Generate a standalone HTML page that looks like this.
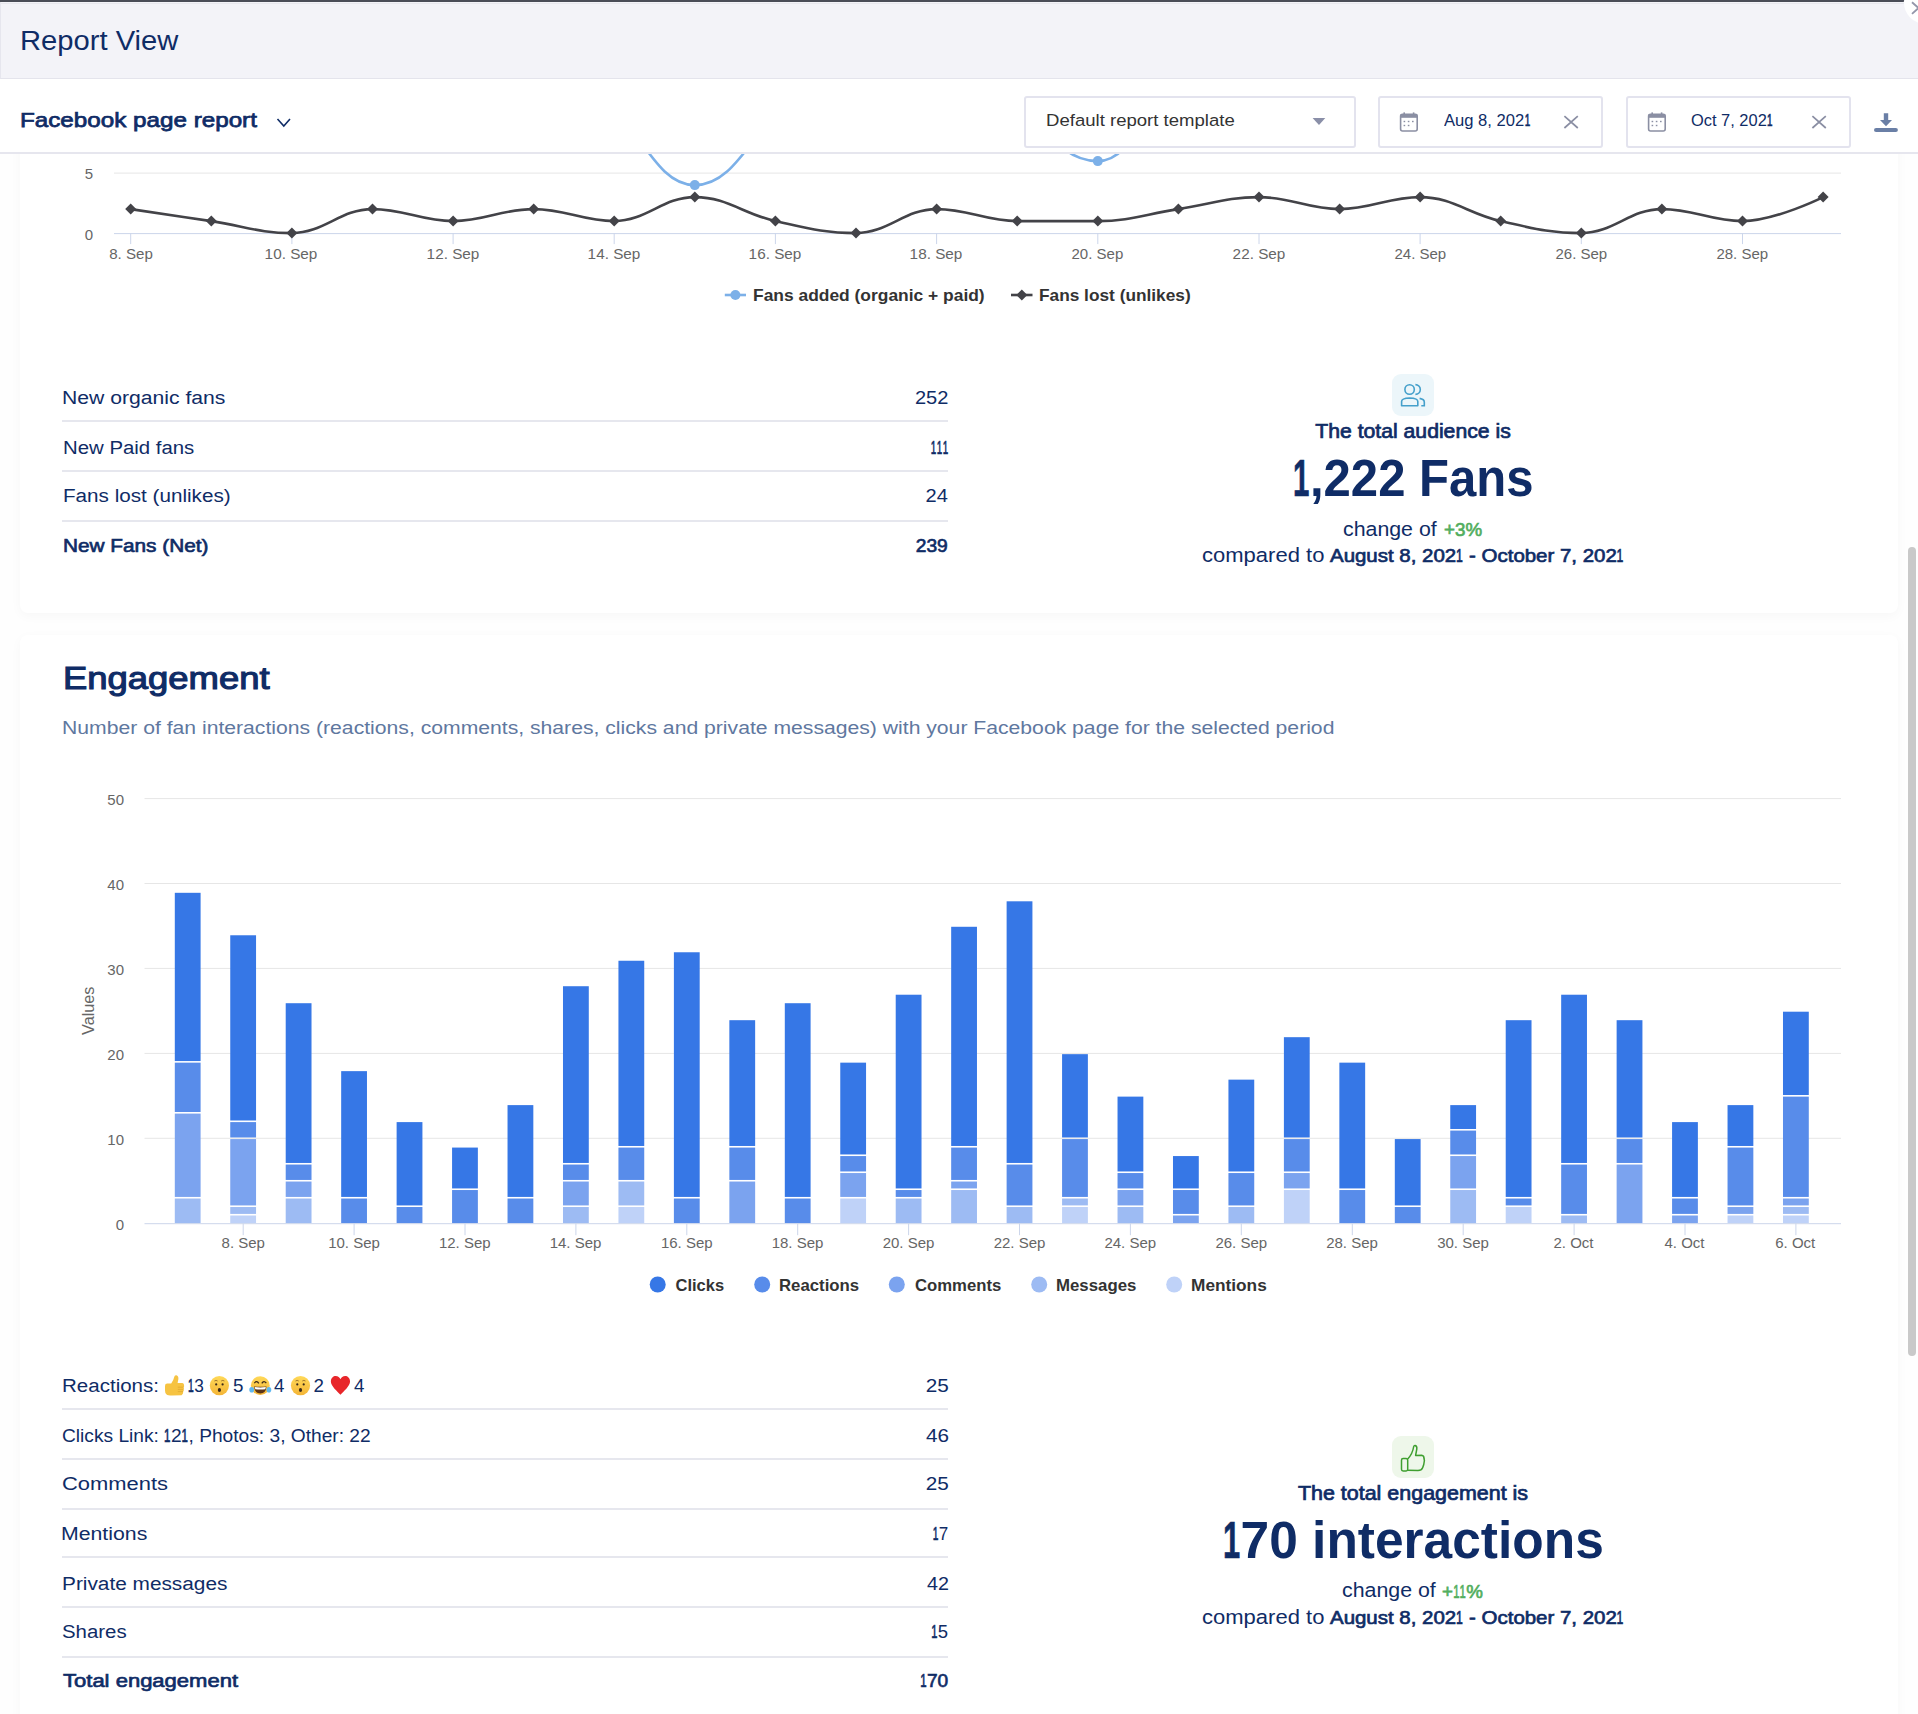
<!DOCTYPE html>
<html><head><meta charset="utf-8"><title>Report View</title>
<style>
html,body{margin:0;padding:0;}
body{width:1918px;height:1714px;overflow:hidden;position:relative;background:#fefefe;font-family:"Liberation Sans",sans-serif;}
.t{position:absolute;white-space:nowrap;line-height:1;}
.t b{font-weight:700;}
.n1{display:inline-block;transform:scaleX(0.6);margin:0 -0.1em;-webkit-text-stroke-width:0.7px;}
.card{position:absolute;left:20px;width:1878px;background:#fff;border-radius:8px;box-shadow:0 3px 12px rgba(0,0,0,0.03);}
svg{position:absolute;left:0;top:0;}
#hdr{position:absolute;left:0;top:0;width:1918px;height:153px;z-index:5;}
</style></head><body>
<div class="card" style="top:-200px;height:813px;"></div>
<div class="card" style="top:635px;height:1200px;"></div>
<svg width="1918" height="1714" viewBox="0 0 1918 1714">
<line x1="114" y1="173.1" x2="1841" y2="173.1" stroke="#e6e6e6" stroke-width="1"/>
<line x1="114" y1="113.1" x2="1841" y2="113.1" stroke="#e6e6e6" stroke-width="1"/>
<line x1="114" y1="53.1" x2="1841" y2="53.1" stroke="#e6e6e6" stroke-width="1"/>
<line x1="114" y1="233.6" x2="1841" y2="233.6" stroke="#ccd6eb" stroke-width="1"/>
<line x1="130.7" y1="233.1" x2="130.7" y2="244.1" stroke="#ccd6eb" stroke-width="1"/>
<line x1="291.9" y1="233.1" x2="291.9" y2="244.1" stroke="#ccd6eb" stroke-width="1"/>
<line x1="453.1" y1="233.1" x2="453.1" y2="244.1" stroke="#ccd6eb" stroke-width="1"/>
<line x1="614.2" y1="233.1" x2="614.2" y2="244.1" stroke="#ccd6eb" stroke-width="1"/>
<line x1="775.4" y1="233.1" x2="775.4" y2="244.1" stroke="#ccd6eb" stroke-width="1"/>
<line x1="936.6" y1="233.1" x2="936.6" y2="244.1" stroke="#ccd6eb" stroke-width="1"/>
<line x1="1097.8" y1="233.1" x2="1097.8" y2="244.1" stroke="#ccd6eb" stroke-width="1"/>
<line x1="1259.0" y1="233.1" x2="1259.0" y2="244.1" stroke="#ccd6eb" stroke-width="1"/>
<line x1="1420.1" y1="233.1" x2="1420.1" y2="244.1" stroke="#ccd6eb" stroke-width="1"/>
<line x1="1581.3" y1="233.1" x2="1581.3" y2="244.1" stroke="#ccd6eb" stroke-width="1"/>
<line x1="1742.5" y1="233.1" x2="1742.5" y2="244.1" stroke="#ccd6eb" stroke-width="1"/>
<path d="M 130.70 -6.90 C 130.70 -6.90 179.05 -6.90 211.29 -6.90 C 243.53 -6.90 259.64 -6.90 291.88 -6.90 C 324.12 -6.90 340.23 -6.90 372.47 -6.90 C 404.71 -6.90 420.82 -6.90 453.06 -6.90 C 485.30 -6.90 501.41 -6.90 533.65 -6.90 C 565.89 -6.90 582.00 68.70 614.24 107.10 C 646.48 145.50 662.59 185.10 694.83 185.10 C 727.07 185.10 743.18 151.50 775.42 113.10 C 807.66 74.70 823.77 -6.90 856.01 -6.90 C 888.25 -6.90 904.36 -6.90 936.60 -6.90 C 968.84 -6.90 984.95 67.50 1017.19 101.10 C 1049.43 134.70 1065.54 161.10 1097.78 161.10 C 1130.02 161.10 1146.13 110.70 1178.37 77.10 C 1210.61 43.50 1226.72 -6.90 1258.96 -6.90 C 1291.20 -6.90 1307.31 -6.90 1339.55 -6.90 C 1371.79 -6.90 1387.90 -6.90 1420.14 -6.90 C 1452.38 -6.90 1468.49 -6.90 1500.73 -6.90 C 1532.97 -6.90 1549.08 -6.90 1581.32 -6.90 C 1613.56 -6.90 1629.67 -6.90 1661.91 -6.90 C 1694.15 -6.90 1710.26 -6.90 1742.50 -6.90 C 1774.74 -6.90 1823.09 -6.90 1823.09 -6.90" fill="none" stroke="#7cb0e8" stroke-width="2.6"/>
<circle cx="130.7" cy="-6.9" r="5" fill="#7cb0e8"/>
<circle cx="211.3" cy="-6.9" r="5" fill="#7cb0e8"/>
<circle cx="291.9" cy="-6.9" r="5" fill="#7cb0e8"/>
<circle cx="372.5" cy="-6.9" r="5" fill="#7cb0e8"/>
<circle cx="453.1" cy="-6.9" r="5" fill="#7cb0e8"/>
<circle cx="533.7" cy="-6.9" r="5" fill="#7cb0e8"/>
<circle cx="614.2" cy="107.1" r="5" fill="#7cb0e8"/>
<circle cx="694.8" cy="185.1" r="5" fill="#7cb0e8"/>
<circle cx="775.4" cy="113.1" r="5" fill="#7cb0e8"/>
<circle cx="856.0" cy="-6.9" r="5" fill="#7cb0e8"/>
<circle cx="936.6" cy="-6.9" r="5" fill="#7cb0e8"/>
<circle cx="1017.2" cy="101.1" r="5" fill="#7cb0e8"/>
<circle cx="1097.8" cy="161.1" r="5" fill="#7cb0e8"/>
<circle cx="1178.4" cy="77.1" r="5" fill="#7cb0e8"/>
<circle cx="1259.0" cy="-6.9" r="5" fill="#7cb0e8"/>
<circle cx="1339.6" cy="-6.9" r="5" fill="#7cb0e8"/>
<circle cx="1420.1" cy="-6.9" r="5" fill="#7cb0e8"/>
<circle cx="1500.7" cy="-6.9" r="5" fill="#7cb0e8"/>
<circle cx="1581.3" cy="-6.9" r="5" fill="#7cb0e8"/>
<circle cx="1661.9" cy="-6.9" r="5" fill="#7cb0e8"/>
<circle cx="1742.5" cy="-6.9" r="5" fill="#7cb0e8"/>
<circle cx="1823.1" cy="-6.9" r="5" fill="#7cb0e8"/>
<path d="M 130.70 209.10 C 130.70 209.10 179.05 216.30 211.29 221.10 C 243.53 225.90 259.64 233.10 291.88 233.10 C 324.12 233.10 340.23 209.10 372.47 209.10 C 404.71 209.10 420.82 221.10 453.06 221.10 C 485.30 221.10 501.41 209.10 533.65 209.10 C 565.89 209.10 582.00 221.10 614.24 221.10 C 646.48 221.10 662.59 197.10 694.83 197.10 C 727.07 197.10 743.18 213.90 775.42 221.10 C 807.66 228.30 823.77 233.10 856.01 233.10 C 888.25 233.10 904.36 209.10 936.60 209.10 C 968.84 209.10 984.95 221.10 1017.19 221.10 C 1049.43 221.10 1065.54 221.10 1097.78 221.10 C 1130.02 221.10 1146.13 213.90 1178.37 209.10 C 1210.61 204.30 1226.72 197.10 1258.96 197.10 C 1291.20 197.10 1307.31 209.10 1339.55 209.10 C 1371.79 209.10 1387.90 197.10 1420.14 197.10 C 1452.38 197.10 1468.49 213.90 1500.73 221.10 C 1532.97 228.30 1549.08 233.10 1581.32 233.10 C 1613.56 233.10 1629.67 209.10 1661.91 209.10 C 1694.15 209.10 1710.26 221.10 1742.50 221.10 C 1774.74 221.10 1823.09 197.10 1823.09 197.10" fill="none" stroke="#434348" stroke-width="2.6"/>
<path d="M 130.7 203.6 L 136.2 209.1 L 130.7 214.6 L 125.2 209.1 Z" fill="#434348"/>
<path d="M 211.3 215.6 L 216.8 221.1 L 211.3 226.6 L 205.8 221.1 Z" fill="#434348"/>
<path d="M 291.9 227.6 L 297.4 233.1 L 291.9 238.6 L 286.4 233.1 Z" fill="#434348"/>
<path d="M 372.5 203.6 L 378.0 209.1 L 372.5 214.6 L 367.0 209.1 Z" fill="#434348"/>
<path d="M 453.1 215.6 L 458.6 221.1 L 453.1 226.6 L 447.6 221.1 Z" fill="#434348"/>
<path d="M 533.7 203.6 L 539.2 209.1 L 533.7 214.6 L 528.2 209.1 Z" fill="#434348"/>
<path d="M 614.2 215.6 L 619.7 221.1 L 614.2 226.6 L 608.7 221.1 Z" fill="#434348"/>
<path d="M 694.8 191.6 L 700.3 197.1 L 694.8 202.6 L 689.3 197.1 Z" fill="#434348"/>
<path d="M 775.4 215.6 L 780.9 221.1 L 775.4 226.6 L 769.9 221.1 Z" fill="#434348"/>
<path d="M 856.0 227.6 L 861.5 233.1 L 856.0 238.6 L 850.5 233.1 Z" fill="#434348"/>
<path d="M 936.6 203.6 L 942.1 209.1 L 936.6 214.6 L 931.1 209.1 Z" fill="#434348"/>
<path d="M 1017.2 215.6 L 1022.7 221.1 L 1017.2 226.6 L 1011.7 221.1 Z" fill="#434348"/>
<path d="M 1097.8 215.6 L 1103.3 221.1 L 1097.8 226.6 L 1092.3 221.1 Z" fill="#434348"/>
<path d="M 1178.4 203.6 L 1183.9 209.1 L 1178.4 214.6 L 1172.9 209.1 Z" fill="#434348"/>
<path d="M 1259.0 191.6 L 1264.5 197.1 L 1259.0 202.6 L 1253.5 197.1 Z" fill="#434348"/>
<path d="M 1339.6 203.6 L 1345.1 209.1 L 1339.6 214.6 L 1334.1 209.1 Z" fill="#434348"/>
<path d="M 1420.1 191.6 L 1425.6 197.1 L 1420.1 202.6 L 1414.6 197.1 Z" fill="#434348"/>
<path d="M 1500.7 215.6 L 1506.2 221.1 L 1500.7 226.6 L 1495.2 221.1 Z" fill="#434348"/>
<path d="M 1581.3 227.6 L 1586.8 233.1 L 1581.3 238.6 L 1575.8 233.1 Z" fill="#434348"/>
<path d="M 1661.9 203.6 L 1667.4 209.1 L 1661.9 214.6 L 1656.4 209.1 Z" fill="#434348"/>
<path d="M 1742.5 215.6 L 1748.0 221.1 L 1742.5 226.6 L 1737.0 221.1 Z" fill="#434348"/>
<path d="M 1823.1 191.6 L 1828.6 197.1 L 1823.1 202.6 L 1817.6 197.1 Z" fill="#434348"/>
<line x1="724.8" y1="295" x2="746" y2="295" stroke="#7cb0e8" stroke-width="2.6"/><circle cx="735.4" cy="295" r="5" fill="#7cb0e8"/>
<line x1="1011" y1="295" x2="1032.5" y2="295" stroke="#434348" stroke-width="2.6"/><path d="M 1021.8 289.5 L 1027.3 295 L 1021.8 300.5 L 1016.3 295 Z" fill="#434348"/>
<rect x="62" y="420" width="886" height="2" fill="#e6e7ee"/>
<rect x="62" y="470" width="886" height="2" fill="#e6e7ee"/>
<rect x="62" y="520" width="886" height="2" fill="#e6e7ee"/>
<rect x="62" y="1408" width="886" height="2" fill="#e6e7ee"/>
<rect x="62" y="1458" width="886" height="2" fill="#e6e7ee"/>
<rect x="62" y="1508" width="886" height="2" fill="#e6e7ee"/>
<rect x="62" y="1556" width="886" height="2" fill="#e6e7ee"/>
<rect x="62" y="1606" width="886" height="2" fill="#e6e7ee"/>
<rect x="62" y="1656" width="886" height="2" fill="#e6e7ee"/>
<line x1="144.5" y1="1138.3" x2="1841" y2="1138.3" stroke="#e6e6e6" stroke-width="1"/>
<line x1="144.5" y1="1053.4" x2="1841" y2="1053.4" stroke="#e6e6e6" stroke-width="1"/>
<line x1="144.5" y1="968.4" x2="1841" y2="968.4" stroke="#e6e6e6" stroke-width="1"/>
<line x1="144.5" y1="883.5" x2="1841" y2="883.5" stroke="#e6e6e6" stroke-width="1"/>
<line x1="144.5" y1="798.6" x2="1841" y2="798.6" stroke="#e6e6e6" stroke-width="1"/>
<rect x="174.80" y="1198.52" width="25.8" height="24.68" fill="#9dbbf3"/>
<rect x="174.80" y="1113.60" width="25.8" height="83.32" fill="#7ba3ef"/>
<rect x="174.80" y="1062.65" width="25.8" height="49.35" fill="#588cea"/>
<rect x="174.80" y="892.81" width="25.8" height="168.24" fill="#3677e6"/>
<rect x="230.25" y="1215.51" width="25.8" height="7.69" fill="#bfd2f8"/>
<rect x="230.25" y="1207.02" width="25.8" height="6.89" fill="#9dbbf3"/>
<rect x="230.25" y="1139.08" width="25.8" height="66.34" fill="#7ba3ef"/>
<rect x="230.25" y="1122.10" width="25.8" height="15.38" fill="#588cea"/>
<rect x="230.25" y="935.27" width="25.8" height="185.22" fill="#3677e6"/>
<rect x="285.71" y="1198.52" width="25.8" height="24.68" fill="#9dbbf3"/>
<rect x="285.71" y="1181.54" width="25.8" height="15.38" fill="#7ba3ef"/>
<rect x="285.71" y="1164.56" width="25.8" height="15.38" fill="#588cea"/>
<rect x="285.71" y="1003.21" width="25.8" height="159.75" fill="#3677e6"/>
<rect x="341.17" y="1198.52" width="25.8" height="24.68" fill="#588cea"/>
<rect x="341.17" y="1071.14" width="25.8" height="125.78" fill="#3677e6"/>
<rect x="396.62" y="1207.02" width="25.8" height="16.18" fill="#588cea"/>
<rect x="396.62" y="1122.10" width="25.8" height="83.32" fill="#3677e6"/>
<rect x="452.07" y="1190.03" width="25.8" height="33.17" fill="#588cea"/>
<rect x="452.07" y="1147.57" width="25.8" height="40.86" fill="#3677e6"/>
<rect x="507.53" y="1198.52" width="25.8" height="24.68" fill="#588cea"/>
<rect x="507.53" y="1105.11" width="25.8" height="91.81" fill="#3677e6"/>
<rect x="562.99" y="1207.02" width="25.8" height="16.18" fill="#9dbbf3"/>
<rect x="562.99" y="1181.54" width="25.8" height="23.88" fill="#7ba3ef"/>
<rect x="562.99" y="1164.56" width="25.8" height="15.38" fill="#588cea"/>
<rect x="562.99" y="986.22" width="25.8" height="176.73" fill="#3677e6"/>
<rect x="618.44" y="1207.02" width="25.8" height="16.18" fill="#bfd2f8"/>
<rect x="618.44" y="1181.54" width="25.8" height="23.88" fill="#9dbbf3"/>
<rect x="618.44" y="1147.57" width="25.8" height="32.37" fill="#588cea"/>
<rect x="618.44" y="960.75" width="25.8" height="185.22" fill="#3677e6"/>
<rect x="673.89" y="1198.52" width="25.8" height="24.68" fill="#588cea"/>
<rect x="673.89" y="952.26" width="25.8" height="244.67" fill="#3677e6"/>
<rect x="729.35" y="1181.54" width="25.8" height="41.66" fill="#7ba3ef"/>
<rect x="729.35" y="1147.57" width="25.8" height="32.37" fill="#588cea"/>
<rect x="729.35" y="1020.19" width="25.8" height="125.78" fill="#3677e6"/>
<rect x="784.80" y="1198.52" width="25.8" height="24.68" fill="#588cea"/>
<rect x="784.80" y="1003.21" width="25.8" height="193.72" fill="#3677e6"/>
<rect x="840.26" y="1198.52" width="25.8" height="24.68" fill="#bfd2f8"/>
<rect x="840.26" y="1173.05" width="25.8" height="23.88" fill="#7ba3ef"/>
<rect x="840.26" y="1156.06" width="25.8" height="15.38" fill="#588cea"/>
<rect x="840.26" y="1062.65" width="25.8" height="91.81" fill="#3677e6"/>
<rect x="895.72" y="1198.52" width="25.8" height="24.68" fill="#9dbbf3"/>
<rect x="895.72" y="1190.03" width="25.8" height="6.89" fill="#588cea"/>
<rect x="895.72" y="994.72" width="25.8" height="193.72" fill="#3677e6"/>
<rect x="951.17" y="1190.03" width="25.8" height="33.17" fill="#9dbbf3"/>
<rect x="951.17" y="1181.54" width="25.8" height="6.89" fill="#7ba3ef"/>
<rect x="951.17" y="1147.57" width="25.8" height="32.37" fill="#588cea"/>
<rect x="951.17" y="926.78" width="25.8" height="219.19" fill="#3677e6"/>
<rect x="1006.62" y="1207.02" width="25.8" height="16.18" fill="#9dbbf3"/>
<rect x="1006.62" y="1164.56" width="25.8" height="40.86" fill="#588cea"/>
<rect x="1006.62" y="901.30" width="25.8" height="261.65" fill="#3677e6"/>
<rect x="1062.08" y="1207.02" width="25.8" height="16.18" fill="#bfd2f8"/>
<rect x="1062.08" y="1198.52" width="25.8" height="6.89" fill="#9dbbf3"/>
<rect x="1062.08" y="1139.08" width="25.8" height="57.84" fill="#588cea"/>
<rect x="1062.08" y="1054.16" width="25.8" height="83.32" fill="#3677e6"/>
<rect x="1117.53" y="1207.02" width="25.8" height="16.18" fill="#9dbbf3"/>
<rect x="1117.53" y="1190.03" width="25.8" height="15.38" fill="#7ba3ef"/>
<rect x="1117.53" y="1173.05" width="25.8" height="15.38" fill="#588cea"/>
<rect x="1117.53" y="1096.62" width="25.8" height="74.83" fill="#3677e6"/>
<rect x="1172.99" y="1215.51" width="25.8" height="7.69" fill="#7ba3ef"/>
<rect x="1172.99" y="1190.03" width="25.8" height="23.88" fill="#588cea"/>
<rect x="1172.99" y="1156.06" width="25.8" height="32.37" fill="#3677e6"/>
<rect x="1228.44" y="1207.02" width="25.8" height="16.18" fill="#9dbbf3"/>
<rect x="1228.44" y="1173.05" width="25.8" height="32.37" fill="#588cea"/>
<rect x="1228.44" y="1079.64" width="25.8" height="91.81" fill="#3677e6"/>
<rect x="1283.90" y="1190.03" width="25.8" height="33.17" fill="#bfd2f8"/>
<rect x="1283.90" y="1173.05" width="25.8" height="15.38" fill="#7ba3ef"/>
<rect x="1283.90" y="1139.08" width="25.8" height="32.37" fill="#588cea"/>
<rect x="1283.90" y="1037.18" width="25.8" height="100.30" fill="#3677e6"/>
<rect x="1339.36" y="1190.03" width="25.8" height="33.17" fill="#588cea"/>
<rect x="1339.36" y="1062.65" width="25.8" height="125.78" fill="#3677e6"/>
<rect x="1394.81" y="1207.02" width="25.8" height="16.18" fill="#588cea"/>
<rect x="1394.81" y="1139.08" width="25.8" height="66.34" fill="#3677e6"/>
<rect x="1450.26" y="1190.03" width="25.8" height="33.17" fill="#9dbbf3"/>
<rect x="1450.26" y="1156.06" width="25.8" height="32.37" fill="#7ba3ef"/>
<rect x="1450.26" y="1130.59" width="25.8" height="23.88" fill="#588cea"/>
<rect x="1450.26" y="1105.11" width="25.8" height="23.88" fill="#3677e6"/>
<rect x="1505.72" y="1207.02" width="25.8" height="16.18" fill="#bfd2f8"/>
<rect x="1505.72" y="1198.52" width="25.8" height="6.89" fill="#588cea"/>
<rect x="1505.72" y="1020.19" width="25.8" height="176.73" fill="#3677e6"/>
<rect x="1561.17" y="1215.51" width="25.8" height="7.69" fill="#9dbbf3"/>
<rect x="1561.17" y="1164.56" width="25.8" height="49.35" fill="#588cea"/>
<rect x="1561.17" y="994.72" width="25.8" height="168.24" fill="#3677e6"/>
<rect x="1616.63" y="1164.56" width="25.8" height="58.64" fill="#7ba3ef"/>
<rect x="1616.63" y="1139.08" width="25.8" height="23.88" fill="#588cea"/>
<rect x="1616.63" y="1020.19" width="25.8" height="117.29" fill="#3677e6"/>
<rect x="1672.08" y="1215.51" width="25.8" height="7.69" fill="#7ba3ef"/>
<rect x="1672.08" y="1198.52" width="25.8" height="15.38" fill="#588cea"/>
<rect x="1672.08" y="1122.10" width="25.8" height="74.83" fill="#3677e6"/>
<rect x="1727.54" y="1215.51" width="25.8" height="7.69" fill="#bfd2f8"/>
<rect x="1727.54" y="1207.02" width="25.8" height="6.89" fill="#7ba3ef"/>
<rect x="1727.54" y="1147.57" width="25.8" height="57.84" fill="#588cea"/>
<rect x="1727.54" y="1105.11" width="25.8" height="40.86" fill="#3677e6"/>
<rect x="1782.99" y="1215.51" width="25.8" height="7.69" fill="#bfd2f8"/>
<rect x="1782.99" y="1207.02" width="25.8" height="6.89" fill="#9dbbf3"/>
<rect x="1782.99" y="1198.52" width="25.8" height="6.89" fill="#7ba3ef"/>
<rect x="1782.99" y="1096.62" width="25.8" height="100.30" fill="#588cea"/>
<rect x="1782.99" y="1011.70" width="25.8" height="83.32" fill="#3677e6"/>
<line x1="144.5" y1="1223.7" x2="1841" y2="1223.7" stroke="#ccd6eb" stroke-width="1"/>
<line x1="243.2" y1="1223.2" x2="243.2" y2="1235.2" stroke="#ccd6eb" stroke-width="1"/>
<line x1="354.1" y1="1223.2" x2="354.1" y2="1235.2" stroke="#ccd6eb" stroke-width="1"/>
<line x1="465.0" y1="1223.2" x2="465.0" y2="1235.2" stroke="#ccd6eb" stroke-width="1"/>
<line x1="575.9" y1="1223.2" x2="575.9" y2="1235.2" stroke="#ccd6eb" stroke-width="1"/>
<line x1="686.8" y1="1223.2" x2="686.8" y2="1235.2" stroke="#ccd6eb" stroke-width="1"/>
<line x1="797.7" y1="1223.2" x2="797.7" y2="1235.2" stroke="#ccd6eb" stroke-width="1"/>
<line x1="908.6" y1="1223.2" x2="908.6" y2="1235.2" stroke="#ccd6eb" stroke-width="1"/>
<line x1="1019.5" y1="1223.2" x2="1019.5" y2="1235.2" stroke="#ccd6eb" stroke-width="1"/>
<line x1="1130.4" y1="1223.2" x2="1130.4" y2="1235.2" stroke="#ccd6eb" stroke-width="1"/>
<line x1="1241.3" y1="1223.2" x2="1241.3" y2="1235.2" stroke="#ccd6eb" stroke-width="1"/>
<line x1="1352.3" y1="1223.2" x2="1352.3" y2="1235.2" stroke="#ccd6eb" stroke-width="1"/>
<line x1="1463.2" y1="1223.2" x2="1463.2" y2="1235.2" stroke="#ccd6eb" stroke-width="1"/>
<line x1="1574.1" y1="1223.2" x2="1574.1" y2="1235.2" stroke="#ccd6eb" stroke-width="1"/>
<line x1="1685.0" y1="1223.2" x2="1685.0" y2="1235.2" stroke="#ccd6eb" stroke-width="1"/>
<line x1="1795.9" y1="1223.2" x2="1795.9" y2="1235.2" stroke="#ccd6eb" stroke-width="1"/>
<text transform="translate(94,1010.8) rotate(-90)" x="0" y="0" text-anchor="middle" font-family="Liberation Sans" font-size="16" fill="#666666" textLength="48.3" lengthAdjust="spacingAndGlyphs">Values</text>
<circle cx="657.7" cy="1284.5" r="8" fill="#3677e6"/>
<circle cx="762.2" cy="1284.5" r="8" fill="#588cea"/>
<circle cx="896.8" cy="1284.5" r="8" fill="#7ba3ef"/>
<circle cx="1039.2" cy="1284.5" r="8" fill="#9dbbf3"/>
<circle cx="1174.2" cy="1284.5" r="8" fill="#bfd2f8"/>
<rect x="1392" y="374" width="42" height="42" rx="9" fill="#ecf6fa"/>
<circle cx="1409.6" cy="389.5" r="4.7" fill="none" stroke="#45a0cb" stroke-width="1.6"/>
<path d="M 1415.4 384.6 A 4.9 4.9 0 0 1 1415.4 394.4" fill="none" stroke="#45a0cb" stroke-width="1.6"/>
<path d="M 1401.6 405.7 L 1401.6 401.5 Q 1401.6 398.2 1409.7 398 Q 1417.8 398.2 1417.8 401.5 L 1417.8 405.7 Z" fill="none" stroke="#45a0cb" stroke-width="1.6" stroke-linejoin="round"/>
<path d="M 1419.6 398.4 Q 1424.3 399.3 1424.3 402 L 1424.3 405.7 L 1421.3 405.7" fill="none" stroke="#45a0cb" stroke-width="1.6"/>
<rect x="1392" y="1436" width="42" height="42" rx="9" fill="#eef7ea"/>
<rect x="1401.5" y="1458.6" width="6.2" height="12.3" rx="1.6" fill="none" stroke="#3f9f30" stroke-width="1.5"/>
<path d="M 1407.7 1459 Q 1412.5 1454 1413.6 1447 Q 1414 1445.2 1415.2 1445.5 Q 1417.2 1446.2 1416.8 1449 L 1415.6 1455.4 L 1421.6 1455.3 Q 1424.2 1455.6 1424 1458.5 L 1424.4 1460.5 Q 1424 1465 1422.6 1467.8 Q 1421.6 1470.6 1418 1470.6 L 1407.7 1470.3" fill="none" stroke="#3f9f30" stroke-width="1.5" stroke-linejoin="round"/>
<defs><linearGradient id="yg" x1="0" y1="0" x2="0" y2="1"><stop offset="0" stop-color="#ffd958"/><stop offset="1" stop-color="#f4b537"/></linearGradient></defs>
<circle cx="219.4" cy="1385.6" r="9.6" fill="url(#yg)"/><circle cx="216.20000000000002" cy="1384.3999999999999" r="1.1" fill="#3b2a1a"/><circle cx="222.6" cy="1384.3999999999999" r="1.1" fill="#3b2a1a"/><path d="M 214.4 1381.0 Q 216.0 1379.8 217.6 1381.0 M 221.20000000000002 1381.0 Q 222.8 1379.8 224.4 1381.0" fill="none" stroke="#7a5220" stroke-width="0.7"/><ellipse cx="219.4" cy="1389.8999999999999" rx="1.6" ry="2" fill="#3b2a1a"/>
<circle cx="300.5" cy="1385.6" r="9.6" fill="url(#yg)"/><circle cx="297.3" cy="1384.3999999999999" r="1.1" fill="#3b2a1a"/><circle cx="303.7" cy="1384.3999999999999" r="1.1" fill="#3b2a1a"/><path d="M 295.5 1381.0 Q 297.1 1379.8 298.7 1381.0 M 302.3 1381.0 Q 303.9 1379.8 305.5 1381.0" fill="none" stroke="#7a5220" stroke-width="0.7"/><ellipse cx="300.5" cy="1389.8999999999999" rx="1.6" ry="2" fill="#3b2a1a"/>
<circle cx="260.3" cy="1385.6" r="9.4" fill="url(#yg)"/>
<path d="M 254.3 1383.1 Q 256.8 1380.1 258.8 1383.3999999999999 M 261.8 1383.3999999999999 Q 263.8 1380.1 266.3 1383.1" fill="none" stroke="#3b2a1a" stroke-width="1.2"/>
<path d="M 254.10000000000002 1386.3999999999999 Q 260.3 1387.1999999999998 266.5 1386.3999999999999 Q 265.8 1393.3999999999999 260.3 1393.3999999999999 Q 254.8 1393.3999999999999 254.10000000000002 1386.3999999999999 Z" fill="#5a3418"/>
<path d="M 254.70000000000002 1387.0 Q 260.3 1387.8 265.90000000000003 1387.0 L 265.3 1389.1999999999998 Q 260.3 1390.0 255.3 1389.1999999999998 Z" fill="#fff"/>
<ellipse cx="251.70000000000002" cy="1389.8" rx="2.4" ry="2.8" fill="#5fb8f0"/><ellipse cx="268.90000000000003" cy="1389.8" rx="2.4" ry="2.8" fill="#5fb8f0"/>
<path d="M 340.45 1394.8 C 337.45 1391.5 330.84999999999997 1386.1 330.84999999999997 1381.5 C 330.84999999999997 1377.9 333.45 1376.0 335.65 1376.0 C 338.05 1376.0 339.65 1377.5 340.45 1379.3 C 341.25 1377.5 342.84999999999997 1376.0 345.25 1376.0 C 347.45 1376.0 350.05 1377.9 350.05 1381.5 C 350.05 1386.1 343.45 1391.5 340.45 1394.8 Z" fill="#e8262a"/>
<path d="M 165 1386 Q 165 1383.6 167.2 1383.6 L 171.2 1383.6 Q 173.5 1380.5 174.2 1377 Q 174.6 1374.8 176.4 1375.2 Q 178.6 1375.8 178.4 1379 L 177.6 1383 L 182.4 1383 Q 184.2 1383.2 184.1 1385.4 Q 184.4 1386.4 183.6 1387.2 Q 184.4 1388.2 183.6 1389.4 Q 184.2 1390.6 183.2 1391.6 Q 183.6 1393.6 181.6 1395.2 L 172 1395.6 Q 167.6 1395.6 166.6 1394.6 Q 165 1393.4 165 1390.4 Z" fill="#f6c342"/>
<path d="M 177.8 1387.2 L 183.4 1387.2 M 177.8 1389.4 L 183.4 1389.4 M 177.8 1391.6 L 183 1391.6" stroke="#d9a02a" stroke-width="0.6"/>
</svg>
<div id="texts">
<div class="t" id="t0" style="top:26.72px;font-size:27.5px;font-weight:400;color:#0f2c66;left:20.00px;transform:scaleX(1.0610);transform-origin:0 0;z-index:7;">Report View</div>
<div class="t" id="t1" style="top:109.93px;font-size:20.9px;font-weight:400;color:#0f2c66;-webkit-text-stroke:0.75px #0f2c66;left:20.10px;transform:scaleX(1.1590);transform-origin:0 0;z-index:7;">Facebook page report</div>
<div class="t" id="t2" style="top:112.20px;font-size:16.3px;font-weight:400;color:#333333;left:1046.00px;transform:scaleX(1.1400);transform-origin:0 0;z-index:7;">Default report template</div>
<div class="t" id="t3" style="top:112.12px;font-size:16.4px;font-weight:400;color:#0f2c66;left:1444.00px;transform:scaleX(1.0120);transform-origin:0 0;z-index:7;">Aug 8, 202<span class="n1">1</span></div>
<div class="t" id="t4" style="top:112.12px;font-size:16.4px;font-weight:400;color:#0f2c66;left:1691.00px;transform:scaleX(1.0020);transform-origin:0 0;z-index:7;">Oct 7, 202<span class="n1">1</span></div>
<div class="t" id="t5" style="top:165.80px;font-size:15px;font-weight:400;color:#666666;right:1825.00px;">5</div>
<div class="t" id="t6" style="top:226.60px;font-size:15px;font-weight:400;color:#666666;right:1825.00px;">0</div>
<div class="t" id="t7" style="top:245.90px;font-size:15px;font-weight:400;color:#666666;left:130.50px;transform:translateX(-50%) scaleX(1.0060);">8. Sep</div>
<div class="t" id="t8" style="top:245.90px;font-size:15px;font-weight:400;color:#666666;left:290.98px;transform:translateX(-50%) scaleX(1.0200);">10. Sep</div>
<div class="t" id="t9" style="top:245.90px;font-size:15px;font-weight:400;color:#666666;left:452.96px;transform:translateX(-50%) scaleX(1.0200);">12. Sep</div>
<div class="t" id="t10" style="top:245.90px;font-size:15px;font-weight:400;color:#666666;left:613.94px;transform:translateX(-50%) scaleX(1.0200);">14. Sep</div>
<div class="t" id="t11" style="top:245.90px;font-size:15px;font-weight:400;color:#666666;left:774.92px;transform:translateX(-50%) scaleX(1.0200);">16. Sep</div>
<div class="t" id="t12" style="top:245.90px;font-size:15px;font-weight:400;color:#666666;left:935.90px;transform:translateX(-50%) scaleX(1.0200);">18. Sep</div>
<div class="t" id="t13" style="top:245.90px;font-size:15px;font-weight:400;color:#666666;left:1097.38px;transform:translateX(-50%) ;">20. Sep</div>
<div class="t" id="t14" style="top:245.90px;font-size:15px;font-weight:400;color:#666666;left:1258.86px;transform:translateX(-50%) scaleX(1.0200);">22. Sep</div>
<div class="t" id="t15" style="top:245.90px;font-size:15px;font-weight:400;color:#666666;left:1420.34px;transform:translateX(-50%) ;">24. Sep</div>
<div class="t" id="t16" style="top:245.90px;font-size:15px;font-weight:400;color:#666666;left:1581.32px;transform:translateX(-50%) ;">26. Sep</div>
<div class="t" id="t17" style="top:245.90px;font-size:15px;font-weight:400;color:#666666;left:1742.30px;transform:translateX(-50%) ;">28. Sep</div>
<div class="t" id="t18" style="top:287.33px;font-size:16.5px;font-weight:700;color:#333333;left:752.50px;transform:scaleX(1.0550);transform-origin:0 0;">Fans added (organic + paid)</div>
<div class="t" id="t19" style="top:287.33px;font-size:16.5px;font-weight:700;color:#333333;left:1039.00px;transform:scaleX(1.0470);transform-origin:0 0;">Fans lost (unlikes)</div>
<div class="t" id="t20" style="top:389.09px;font-size:18.8px;font-weight:400;color:#0f2c66;left:61.50px;transform:scaleX(1.1260);transform-origin:0 0;">New organic fans</div>
<div class="t" id="t21" style="top:389.09px;font-size:18.8px;font-weight:400;color:#0f2c66;right:970.00px;transform:scaleX(1.0670);transform-origin:100% 0;">252</div>
<div class="t" id="t22" style="top:439.09px;font-size:18.8px;font-weight:400;color:#0f2c66;left:62.50px;transform:scaleX(1.0840);transform-origin:0 0;">New Paid fans</div>
<div class="t" id="t23" style="top:439.09px;font-size:18.8px;font-weight:400;color:#0f2c66;right:970.00px;transform:scaleX(0.8730);transform-origin:100% 0;"><span class="n1">1</span><span class="n1">1</span><span class="n1">1</span></div>
<div class="t" id="t24" style="top:486.59px;font-size:18.8px;font-weight:400;color:#0f2c66;left:62.50px;transform:scaleX(1.1000);transform-origin:0 0;">Fans lost (unlikes)</div>
<div class="t" id="t25" style="top:486.59px;font-size:18.8px;font-weight:400;color:#0f2c66;right:970.00px;transform:scaleX(1.0670);transform-origin:100% 0;">24</div>
<div class="t" id="t26" style="top:537.56px;font-size:17.86px;font-weight:400;color:#0f2c66;-webkit-text-stroke:0.64px #0f2c66;left:62.50px;transform:scaleX(1.1630);transform-origin:0 0;">New Fans (Net)</div>
<div class="t" id="t27" style="top:537.56px;font-size:17.86px;font-weight:400;color:#0f2c66;-webkit-text-stroke:0.64px #0f2c66;right:970.00px;transform:scaleX(1.0750);transform-origin:100% 0;">239</div>
<div class="t" id="t28" style="top:422.27px;font-size:19.47px;font-weight:400;color:#0f2c66;-webkit-text-stroke:0.70px #0f2c66;left:1412.50px;transform:translateX(-50%) scaleX(1.0890);">The total audience is</div>
<div class="t" id="t29" style="top:452.83px;font-size:51px;font-weight:700;color:#0f2c66;left:1412.50px;transform:translateX(-50%) scaleX(0.9620);"><span class="n1">1</span>,222 Fans</div>
<div class="t" id="t30" style="top:519.66px;font-size:19.3px;font-weight:400;color:#0f2c66;left:1342.50px;transform:scaleX(1.1060);transform-origin:0 0;">change of</div>
<div class="t" id="t31" style="top:521.15px;font-size:18.34px;font-weight:400;color:#52ae5e;-webkit-text-stroke:0.66px #52ae5e;left:1444.00px;transform:scaleX(1.0230);transform-origin:0 0;">+3%</div>
<div class="t" id="t32" style="top:545.66px;font-size:19.3px;font-weight:400;color:#0f2c66;left:1201.50px;transform:scaleX(1.1420);transform-origin:0 0;">compared to</div>
<div class="t" id="t33" style="top:547.15px;font-size:18.34px;font-weight:400;color:#0f2c66;-webkit-text-stroke:0.66px #0f2c66;left:1330.00px;transform:scaleX(1.1150);transform-origin:0 0;">August 8, 202<span class="n1">1</span> - October 7, 202<span class="n1">1</span></div>
<div class="t" id="t34" style="top:664.30px;font-size:30.88px;font-weight:400;color:#0f2c66;-webkit-text-stroke:1.11px #0f2c66;left:63.00px;transform:scaleX(1.1800);transform-origin:0 0;">Engagement</div>
<div class="t" id="t35" style="top:719.00px;font-size:18.9px;font-weight:400;color:#5f789f;left:62.00px;transform:scaleX(1.1200);transform-origin:0 0;">Number of fan interactions (reactions, comments, shares, clicks and private messages) with your Facebook page for the selected period</div>
<div class="t" id="t36" style="top:1216.70px;font-size:15px;font-weight:400;color:#666666;right:1794.00px;">0</div>
<div class="t" id="t37" style="top:1131.78px;font-size:15px;font-weight:400;color:#666666;right:1794.00px;">10</div>
<div class="t" id="t38" style="top:1046.86px;font-size:15px;font-weight:400;color:#666666;right:1794.00px;">20</div>
<div class="t" id="t39" style="top:961.94px;font-size:15px;font-weight:400;color:#666666;right:1794.00px;">30</div>
<div class="t" id="t40" style="top:877.02px;font-size:15px;font-weight:400;color:#666666;right:1794.00px;">40</div>
<div class="t" id="t41" style="top:792.10px;font-size:15px;font-weight:400;color:#666666;right:1794.00px;">50</div>
<div class="t" id="t42" style="top:1235.10px;font-size:15px;font-weight:400;color:#666666;left:243.25px;transform:translateX(-50%) ;">8. Sep</div>
<div class="t" id="t43" style="top:1235.10px;font-size:15px;font-weight:400;color:#666666;left:354.00px;transform:translateX(-50%) ;">10. Sep</div>
<div class="t" id="t44" style="top:1235.10px;font-size:15px;font-weight:400;color:#666666;left:464.75px;transform:translateX(-50%) ;">12. Sep</div>
<div class="t" id="t45" style="top:1235.10px;font-size:15px;font-weight:400;color:#666666;left:575.50px;transform:translateX(-50%) ;">14. Sep</div>
<div class="t" id="t46" style="top:1235.10px;font-size:15px;font-weight:400;color:#666666;left:686.75px;transform:translateX(-50%) ;">16. Sep</div>
<div class="t" id="t47" style="top:1235.10px;font-size:15px;font-weight:400;color:#666666;left:797.50px;transform:translateX(-50%) ;">18. Sep</div>
<div class="t" id="t48" style="top:1235.10px;font-size:15px;font-weight:400;color:#666666;left:908.50px;transform:translateX(-50%) ;">20. Sep</div>
<div class="t" id="t49" style="top:1235.10px;font-size:15px;font-weight:400;color:#666666;left:1019.50px;transform:translateX(-50%) ;">22. Sep</div>
<div class="t" id="t50" style="top:1235.10px;font-size:15px;font-weight:400;color:#666666;left:1130.25px;transform:translateX(-50%) ;">24. Sep</div>
<div class="t" id="t51" style="top:1235.10px;font-size:15px;font-weight:400;color:#666666;left:1241.25px;transform:translateX(-50%) ;">26. Sep</div>
<div class="t" id="t52" style="top:1235.10px;font-size:15px;font-weight:400;color:#666666;left:1352.00px;transform:translateX(-50%) ;">28. Sep</div>
<div class="t" id="t53" style="top:1235.10px;font-size:15px;font-weight:400;color:#666666;left:1463.00px;transform:translateX(-50%) ;">30. Sep</div>
<div class="t" id="t54" style="top:1235.10px;font-size:15px;font-weight:400;color:#666666;left:1573.50px;transform:translateX(-50%) ;">2. Oct</div>
<div class="t" id="t55" style="top:1235.10px;font-size:15px;font-weight:400;color:#666666;left:1684.50px;transform:translateX(-50%) ;">4. Oct</div>
<div class="t" id="t56" style="top:1235.10px;font-size:15px;font-weight:400;color:#666666;left:1795.25px;transform:translateX(-50%) ;">6. Oct</div>
<div class="t" id="t57" style="top:1277.03px;font-size:16.5px;font-weight:700;color:#333333;left:675.50px;">Clicks</div>
<div class="t" id="t58" style="top:1277.03px;font-size:16.5px;font-weight:700;color:#333333;left:779.00px;transform:scaleX(1.0160);transform-origin:0 0;">Reactions</div>
<div class="t" id="t59" style="top:1277.03px;font-size:16.5px;font-weight:700;color:#333333;left:915.00px;transform:scaleX(1.0120);transform-origin:0 0;">Comments</div>
<div class="t" id="t60" style="top:1277.03px;font-size:16.5px;font-weight:700;color:#333333;left:1056.00px;transform:scaleX(1.0190);transform-origin:0 0;">Messages</div>
<div class="t" id="t61" style="top:1277.03px;font-size:16.5px;font-weight:700;color:#333333;left:1191.00px;transform:scaleX(1.0460);transform-origin:0 0;">Mentions</div>
<div class="t" id="t62" style="top:1377.09px;font-size:18.8px;font-weight:400;color:#0f2c66;left:62.00px;transform:scaleX(1.0930);transform-origin:0 0;">Reactions:</div>
<div class="t" id="t63" style="top:1377.09px;font-size:18.8px;font-weight:400;color:#0f2c66;left:188.00px;transform:scaleX(0.9170);transform-origin:0 0;"><span class="n1">1</span>3</div>
<div class="t" id="t64" style="top:1377.09px;font-size:18.8px;font-weight:400;color:#0f2c66;left:233.00px;">5</div>
<div class="t" id="t65" style="top:1377.09px;font-size:18.8px;font-weight:400;color:#0f2c66;left:274.00px;">4</div>
<div class="t" id="t66" style="top:1377.09px;font-size:18.8px;font-weight:400;color:#0f2c66;left:313.50px;">2</div>
<div class="t" id="t67" style="top:1377.09px;font-size:18.8px;font-weight:400;color:#0f2c66;left:354.00px;">4</div>
<div class="t" id="t68" style="top:1377.09px;font-size:18.8px;font-weight:400;color:#0f2c66;right:969.00px;transform:scaleX(1.1030);transform-origin:100% 0;">25</div>
<div class="t" id="t69" style="top:1427.09px;font-size:18.8px;font-weight:400;color:#0f2c66;left:62.00px;transform:scaleX(1.0200);transform-origin:0 0;">Clicks Link: <span class="n1">1</span>2<span class="n1">1</span>, Photos: 3, Other: 22</div>
<div class="t" id="t70" style="top:1427.09px;font-size:18.8px;font-weight:400;color:#0f2c66;right:969.00px;transform:scaleX(1.1000);transform-origin:100% 0;">46</div>
<div class="t" id="t71" style="top:1475.09px;font-size:18.8px;font-weight:400;color:#0f2c66;left:62.00px;transform:scaleX(1.1670);transform-origin:0 0;">Comments</div>
<div class="t" id="t72" style="top:1475.09px;font-size:18.8px;font-weight:400;color:#0f2c66;right:969.00px;transform:scaleX(1.1030);transform-origin:100% 0;">25</div>
<div class="t" id="t73" style="top:1525.09px;font-size:18.8px;font-weight:400;color:#0f2c66;left:61.00px;transform:scaleX(1.1320);transform-origin:0 0;">Mentions</div>
<div class="t" id="t74" style="top:1525.09px;font-size:18.8px;font-weight:400;color:#0f2c66;right:970.00px;transform:scaleX(0.9060);transform-origin:100% 0;"><span class="n1">1</span>7</div>
<div class="t" id="t75" style="top:1574.59px;font-size:18.8px;font-weight:400;color:#0f2c66;left:62.00px;transform:scaleX(1.1080);transform-origin:0 0;">Private messages</div>
<div class="t" id="t76" style="top:1574.59px;font-size:18.8px;font-weight:400;color:#0f2c66;right:969.00px;transform:scaleX(1.0500);transform-origin:100% 0;">42</div>
<div class="t" id="t77" style="top:1622.59px;font-size:18.8px;font-weight:400;color:#0f2c66;left:62.00px;transform:scaleX(1.0860);transform-origin:0 0;">Shares</div>
<div class="t" id="t78" style="top:1622.59px;font-size:18.8px;font-weight:400;color:#0f2c66;right:970.00px;transform:scaleX(0.9850);transform-origin:100% 0;"><span class="n1">1</span>5</div>
<div class="t" id="t79" style="top:1673.06px;font-size:17.86px;font-weight:400;color:#0f2c66;-webkit-text-stroke:0.64px #0f2c66;left:63.00px;transform:scaleX(1.2330);transform-origin:0 0;">Total engagement</div>
<div class="t" id="t80" style="top:1673.06px;font-size:17.86px;font-weight:400;color:#0f2c66;-webkit-text-stroke:0.64px #0f2c66;right:970.00px;transform:scaleX(1.0690);transform-origin:100% 0;"><span class="n1">1</span>70</div>
<div class="t" id="t81" style="top:1483.97px;font-size:19.47px;font-weight:400;color:#0f2c66;-webkit-text-stroke:0.70px #0f2c66;left:1412.50px;transform:translateX(-50%) scaleX(1.1030);">The total engagement is</div>
<div class="t" id="t82" style="top:1515.33px;font-size:51px;font-weight:700;color:#0f2c66;left:1412.50px;transform:translateX(-50%) scaleX(1.0090);"><span class="n1">1</span>70 interactions</div>
<div class="t" id="t83" style="top:1581.36px;font-size:19.3px;font-weight:400;color:#0f2c66;left:1342.00px;transform:scaleX(1.1070);transform-origin:0 0;">change of</div>
<div class="t" id="t84" style="top:1582.85px;font-size:18.34px;font-weight:400;color:#52ae5e;-webkit-text-stroke:0.66px #52ae5e;left:1442.00px;transform:scaleX(1.0220);transform-origin:0 0;">+<span class="n1">1</span><span class="n1">1</span>%</div>
<div class="t" id="t85" style="top:1607.56px;font-size:19.3px;font-weight:400;color:#0f2c66;left:1201.50px;transform:scaleX(1.1420);transform-origin:0 0;">compared to</div>
<div class="t" id="t86" style="top:1609.05px;font-size:18.34px;font-weight:400;color:#0f2c66;-webkit-text-stroke:0.66px #0f2c66;left:1330.00px;transform:scaleX(1.1150);transform-origin:0 0;">August 8, 202<span class="n1">1</span> - October 7, 202<span class="n1">1</span></div>
</div>

<div id="hdr">
  <div style="position:absolute;left:0;top:0;width:1905px;height:2px;background:#4a4d57;border-radius:0 0 3px 0;"></div>
  <div style="position:absolute;left:0;top:2px;width:1918px;height:76px;background:#f3f3f8;border-bottom:1px solid #e4e4ec;border-left:1px solid #e6e6ee;box-sizing:content-box;"></div>
  <div style="position:absolute;left:0;top:3px;width:1904px;height:1px;background:#e8e8ee;"></div>
  <div style="position:absolute;left:0;top:79px;width:1918px;height:73px;background:#fff;border-bottom:2px solid #e6e6ee;"></div>
  <div style="position:absolute;left:1024px;top:96px;width:328px;height:48px;border:2px solid #e3e3ee;border-radius:3px;background:#fff;"></div>
  <div style="position:absolute;left:1378px;top:96px;width:221px;height:48px;border:2px solid #e3e3ee;border-radius:3px;background:#fff;"></div>
  <div style="position:absolute;left:1626px;top:96px;width:221px;height:48px;border:2px solid #e3e3ee;border-radius:3px;background:#fff;"></div>
  <svg width="1918" height="153" viewBox="0 0 1918 153" style="position:absolute;left:0;top:0;">
    <path d="M 277.5 119 L 283.8 126 L 290 119" fill="none" stroke="#0f2c66" stroke-width="1.6"/>
    <path d="M 1312.6 118 L 1325.3 118 L 1319 125 Z" fill="#8a8fa8"/>
    <g id="cal1">
      <rect x="1400.6" y="114.2" width="16.6" height="16.8" rx="2" fill="none" stroke="#8b8fa3" stroke-width="1.6"/>
      <rect x="1400.6" y="114.2" width="16.6" height="3.6" fill="#8b8fa3"/>
      <rect x="1403.4" y="112.4" width="1.6" height="3" fill="#8b8fa3"/>
      <rect x="1412.8" y="112.4" width="1.6" height="3" fill="#8b8fa3"/>
      <rect x="1403.6" y="120.8" width="1.6" height="1.4" fill="#8b8fa3"/><rect x="1407.8" y="120.8" width="1.6" height="1.4" fill="#8b8fa3"/><rect x="1412" y="120.8" width="1.6" height="1.4" fill="#8b8fa3"/>
      <rect x="1403.6" y="124.8" width="1.6" height="1.4" fill="#8b8fa3"/><rect x="1407.8" y="124.8" width="1.6" height="1.4" fill="#8b8fa3"/>
    </g>
    <use href="#cal1" x="248" y="0"/>
    <path d="M 1564.4 116.2 L 1577.8 128 M 1577.8 116.2 L 1564.4 128" stroke="#8a8ea3" stroke-width="1.7"/>
    <path d="M 1812.4 116.2 L 1825.8 128 M 1825.8 116.2 L 1812.4 128" stroke="#8a8ea3" stroke-width="1.7"/>
    <path d="M 1883.8 113.3 L 1888.2 113.3 L 1888.2 120 L 1892 120 L 1886 126.3 L 1880 120 L 1883.8 120 Z" fill="#6a7fa6"/>
    <rect x="1874" y="127.9" width="23.9" height="4.2" rx="2.1" fill="#6a7fa6"/>
  </svg>
  <div style="position:absolute;left:1903.5px;top:-19.5px;width:43px;height:43px;border-radius:50%;background:#fff;"></div>
  <svg width="20" height="20" style="position:absolute;left:1905px;top:0;"><path d="M 7 2.3 L 13.5 8 L 7 13.9" fill="none" stroke="#9496aa" stroke-width="1.8"/></svg>
</div>

<div style="position:absolute;left:1908px;top:547px;width:8px;height:809px;border-radius:4px;background:#c9c9c9;z-index:6;"></div>
</body></html>
